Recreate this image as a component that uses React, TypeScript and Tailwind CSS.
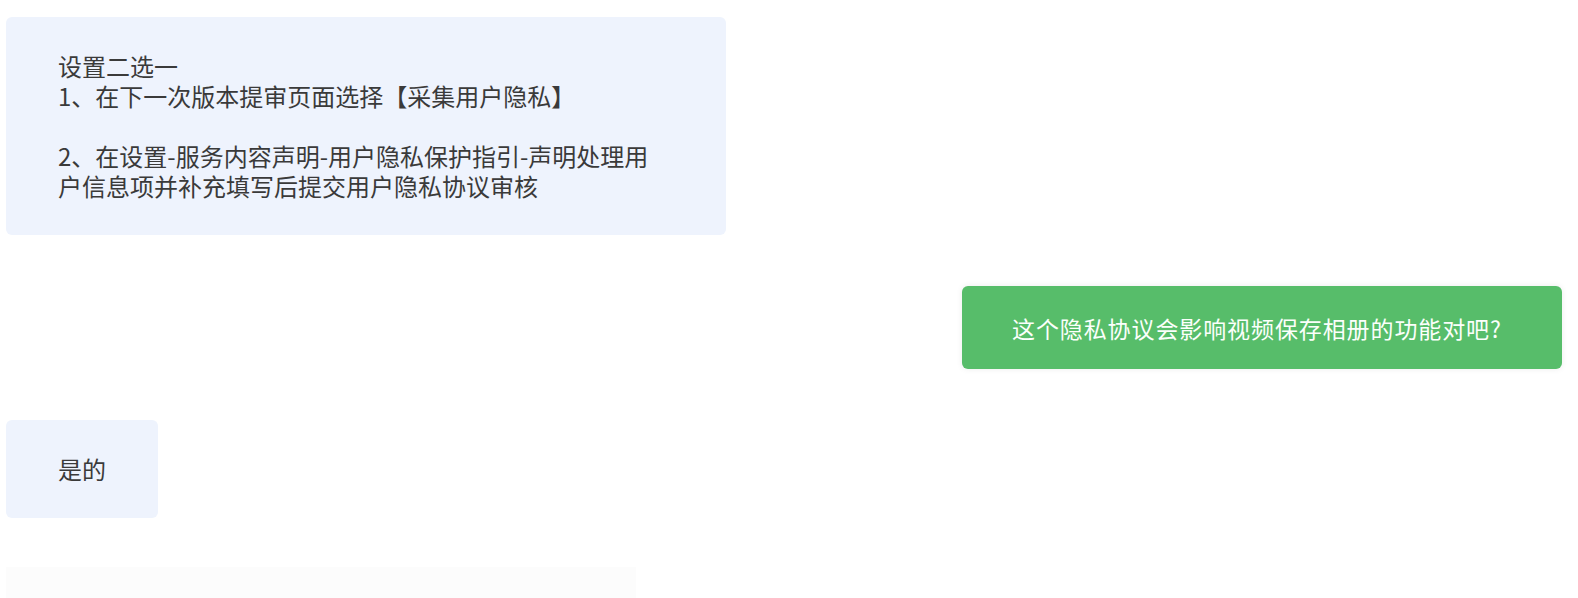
const FONT = "font-['Noto_Sans_CJK_SC','Noto_Sans',sans-serif]";

const FIRST_REPLY = `设置二选一
1、在下一次版本提审页面选择【采集用户隐私】

2、在设置-服务内容声明-用户隐私保护指引-声明处理用户信息项并补充填写后提交用户隐私协议审核`;

function LeftBubble({ text, wide }: { text: string; wide?: boolean }) {
  return (
    <div
      className={`self-start whitespace-pre-wrap rounded-[6px] bg-[#eef3fd] py-[34px] pl-[52px] text-[24px] leading-[30px] text-[#3a3a3a] ${
        wide ? 'w-[720px] pr-[58px]' : 'pr-[52px]'
      }`}
    >
      {text}
    </div>
  );
}

function RightBubble({ text }: { text: string }) {
  return (
    <div className="flex h-[83px] w-[600px] items-center self-end rounded-[6px] bg-[#57bd6a] pl-[50px] text-[23px] leading-[30px] tracking-[0.9px] text-[#fbfffb] shadow-[0_0_6px_rgba(0,0,0,0.08)]">
      {text}
    </div>
  );
}

export default function App() {
  return (
    <div className={`${FONT} h-[598px] w-full overflow-hidden bg-white`}>
      <div className="flex flex-col gap-[51px] pl-[6px] pr-[16px] pt-[17px]">
        <LeftBubble text={FIRST_REPLY} wide />
        <RightBubble text="这个隐私协议会影响视频保存相册的功能对吧?" />
        <LeftBubble text="是的" />
        {/* next message, cut off at the bottom */}
        <div className="h-[40px] w-[630px] shrink-0 -mt-[2px] bg-[#fcfcfc]" />
      </div>
    </div>
  );
}
